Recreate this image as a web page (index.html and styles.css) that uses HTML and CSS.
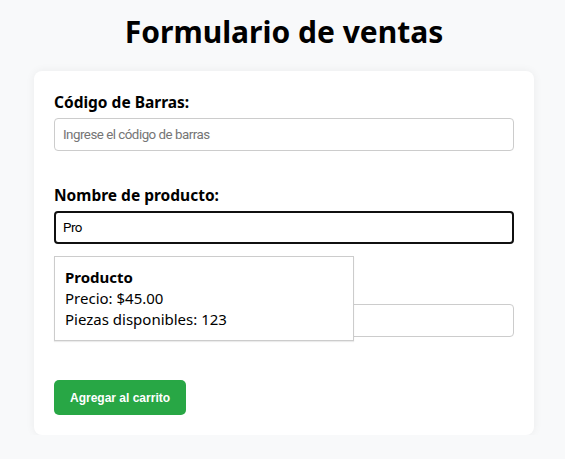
FILE: index.html
```html
<!DOCTYPE html>
<html lang="es">
<head>
<meta charset="utf-8">
<title>Formulario de ventas</title>
<link rel="stylesheet" href="styles.css">
</head>
<body>
<h1 class="title">Formulario de ventas</h1>
<form class="card">
  <div class="group">
    <label class="label" for="codigo">Código de Barras:</label>
    <input class="field" id="codigo" type="text" placeholder="Ingrese el código de barras">
  </div>
  <div class="group">
    <label class="label" for="nombre">Nombre de producto:</label>
    <div class="field-wrap">
      <input class="field focused" id="nombre" type="text" value="Pro">
      <div class="suggest">
        <div class="suggest-name">Producto</div>
        <div>Precio: $45.00</div>
        <div>Piezas disponibles: 123</div>
      </div>
    </div>
  </div>
  <div class="group">
    <label class="label" for="cantidad">Cantidad:</label>
    <input class="field" id="cantidad" type="text">
  </div>
  <button class="btn" type="button">Agregar al carrito</button>
</form>
</body>
</html>
```
FILE: styles.css
```css
html, body {
  margin: 0;
  padding: 0;
}
body {
  background: #f8f9fa;
  font-family: "Noto Sans", "Open Sans", sans-serif;
  color: #000;
  padding: 12px 0 0 3px;
}
.title {
  margin: 0 0 19px;
  text-align: center;
  font-size: 30px;
  font-weight: 700;
  line-height: 40px;
}
.card {
  width: 460px;
  margin: 0 auto;
  background: #fff;
  border-radius: 8px;
  padding: 20px;
  box-shadow: 0 0 10px rgba(0,0,0,0.06);
  display: flex;
  flex-direction: column;
  align-items: flex-start;
}
.group {
  width: 100%;
  margin-bottom: 33px;
}
.label {
  display: block;
  font-size: 15.5px;
  font-weight: 700;
  line-height: 22px;
  margin-bottom: 5px;
}
.field-wrap {
  position: relative;
}
.field {
  display: block;
  box-sizing: border-box;
  width: 100%;
  height: 33px;
  padding: 0 8px;
  border: 1px solid #ccc;
  border-radius: 4px;
  font-family: Roboto, "Liberation Sans", Arial, sans-serif;
  font-size: 13.33px;
  letter-spacing: -0.5px;
  color: #000;
  background: #fff;
  outline: none;
}
.field::placeholder {
  color: #757575;
}
.field.focused {
  border: 2px solid #101010;
  padding: 0 7px;
}
.suggest {
  position: absolute;
  left: 0;
  top: calc(100% + 12px);
  width: 300px;
  box-sizing: border-box;
  background: #fff;
  border: 1px solid #ccc;
  box-shadow: 0 1px 1px rgba(0,0,0,0.08);
  padding: 10px;
  font-size: 15px;
  line-height: 21px;
  z-index: 2;
}
.suggest-name {
  font-weight: 700;
}
.btn {
  margin-top: 10px;
  height: 35px;
  padding: 0 16px;
  border: none;
  border-radius: 5px;
  background: #28a745;
  color: #fff;
  font-family: "Liberation Sans", Arial, sans-serif;
  font-size: 12px;
  font-weight: 700;
}
```
